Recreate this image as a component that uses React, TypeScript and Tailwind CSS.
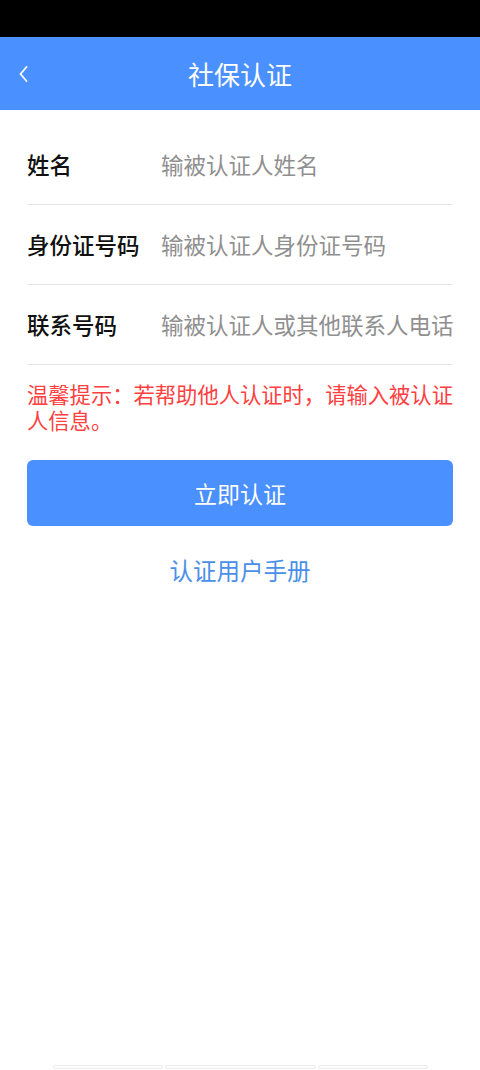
import { useState } from 'react';

const fields = [
  { key: 'name', label: '姓名', placeholder: '输被认证人姓名' },
  { key: 'idcard', label: '身份证号码', placeholder: '输被认证人身份证号码' },
  { key: 'phone', label: '联系号码', placeholder: '输被认证人或其他联系人电话' },
];

export default function App() {
  const [values, setValues] = useState<Record<string, string>>({});

  return (
    <div
      className="w-[480px] h-[1070px] bg-white flex flex-col overflow-hidden"
      style={{ fontFamily: '"Noto Sans CJK SC", "Noto Sans", sans-serif' }}
    >
      <div className="h-[37px] bg-black shrink-0" />

      <div className="h-[73px] bg-[#4a90fe] flex items-center shrink-0">
        <div className="w-[60px] pl-[19px] flex items-center">
          <svg width="9" height="16" viewBox="0 0 9 16" fill="none">
            <path d="M7.5 1 L1.5 8 L7.5 15" stroke="white" strokeWidth="1.8" strokeLinecap="round" strokeLinejoin="round" />
          </svg>
        </div>
        <h1 className="flex-1 text-center text-white text-[26px] leading-none">社保认证</h1>
        <div className="w-[60px]" />
      </div>

      <div className="px-[27px] pt-[15px]">
        {fields.map((f) => (
          <div key={f.key} className="h-[80px] flex items-center border-b border-[#e6e6e6]">
            <span className="w-[134px] shrink-0 text-[22.5px] font-medium text-[#111]">{f.label}</span>
            <input
              value={values[f.key] || ''}
              onChange={(e) => setValues((v) => ({ ...v, [f.key]: e.target.value }))}
              placeholder={f.placeholder}
              className="flex-1 min-w-0 text-[22.5px] text-[#333] placeholder:text-[#8f8f8f] outline-none bg-transparent"
            />
          </div>
        ))}

        <p className="mt-[16px] text-[21.3px] leading-[26px] text-[#ff4040]">
          温馨提示：若帮助他人认证时，请输入被认证人信息。
        </p>

        <button className="mt-[27px] w-full h-[66px] rounded-[6px] bg-[#4a90fe] text-white text-[23px] cursor-pointer">
          立即认证
        </button>

        <div className="mt-[29px] text-center">
          <a className="text-[23.5px] leading-[30px] text-[#4a8fe8] cursor-pointer">认证用户手册</a>
        </div>
      </div>

      <div className="mt-auto pb-[1px] flex justify-center gap-[2px]">
        <div className="w-[110px] h-[4px] rounded-full border border-[#ececec]" />
        <div className="w-[151px] h-[4px] rounded-full border border-[#ececec]" />
        <div className="w-[110px] h-[4px] rounded-full border border-[#ececec]" />
      </div>
    </div>
  );
}
